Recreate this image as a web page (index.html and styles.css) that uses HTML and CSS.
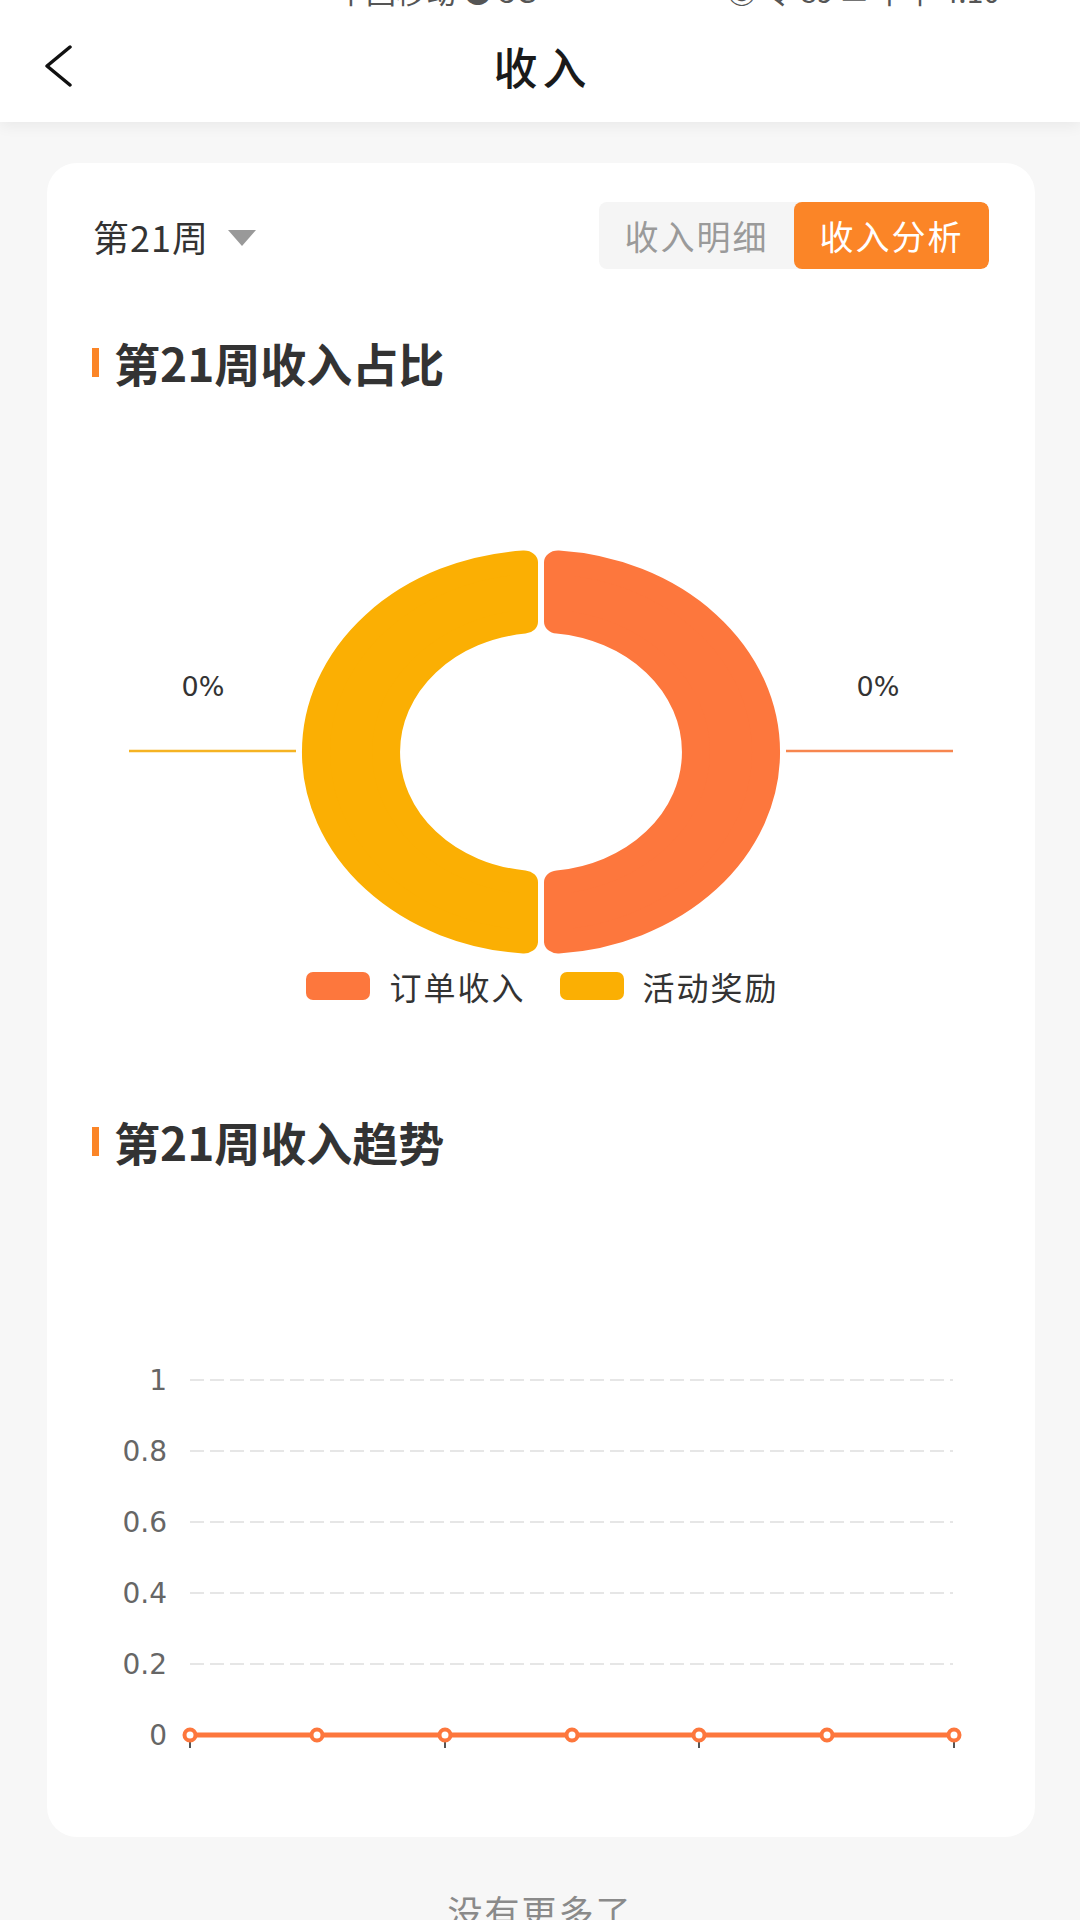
FILE: index.html
```html
<!DOCTYPE html>
<html lang="zh-CN">
<head>
<meta charset="utf-8">
<title>收入</title>
<link rel="stylesheet" href="styles.css">
</head>
<body>
<header class="topbar">
  <div class="status">
    <span class="status-left">中国移动 ● 5G</span>
    <span class="status-right">◉ 令 89 ▭ 下午 4:10</span>
  </div>
  <div class="nav">
    <div class="nav-left">
      <svg class="back" width="30" height="42" viewBox="0 0 30 42"><polyline points="27,2 4,21 27,40" fill="none" stroke="#111" stroke-width="3.5" stroke-linecap="round" stroke-linejoin="round"/></svg>
    </div>
    <div class="nav-title">收入</div>
    <div class="nav-right"></div>
  </div>
</header>

<main class="card">
  <div class="toolbar">
    <div class="week">第21周<span class="caret"></span></div>
    <div class="seg">
      <div class="seg-item off">收入明细</div>
      <div class="seg-item on">收入分析</div>
    </div>
  </div>

  <h2 class="section-title">第21周收入占比</h2>

  <svg class="pie" width="896" height="579" viewBox="0 0 896 579">
    <g transform="translate(448 365) scale(1 0.8452)">
      <path d="M-17,-224.36 A225,225 0 0 0 -17,224.36 L-17,154.06 A155,155 0 0 1 -17,-154.06 Z" fill="#fbaf03" stroke="#fbaf03" stroke-width="28" stroke-linejoin="round"/>
      <path d="M17,-224.36 A225,225 0 0 1 17,224.36 L17,154.06 A155,155 0 0 0 17,-154.06 Z" fill="#fd773d" stroke="#fd773d" stroke-width="28" stroke-linejoin="round"/>
    </g>
    <line x1="36" y1="364" x2="203" y2="364" stroke="#f5b323" stroke-width="2.5"/>
    <line x1="693" y1="364" x2="860" y2="364" stroke="#f7864f" stroke-width="2.5"/>
    <text class="pct" x="110" y="309" text-anchor="middle">0%</text>
    <text class="pct" x="785" y="309" text-anchor="middle">0%</text>
  </svg>

  <div class="legend">
    <div class="legend-item"><span class="swatch order"></span>订单收入</div>
    <div class="legend-item"><span class="swatch bonus"></span>活动奖励</div>
  </div>

  <h2 class="section-title second">第21周收入趋势</h2>

  <svg class="trend" width="896" height="632" viewBox="0 0 896 632">
    <g class="grid">
      <line x1="97" y1="214" x2="860" y2="214"/>
      <line x1="97" y1="285" x2="860" y2="285"/>
      <line x1="97" y1="356" x2="860" y2="356"/>
      <line x1="97" y1="427" x2="860" y2="427"/>
      <line x1="97" y1="498" x2="860" y2="498"/>
    </g>
    <g class="ylab">
      <text x="74" y="224">1</text>
      <text x="74" y="295">0.8</text>
      <text x="74" y="366">0.6</text>
      <text x="74" y="437">0.4</text>
      <text x="74" y="508">0.2</text>
      <text x="74" y="579">0</text>
    </g>
    <g class="ticks">
      <line x1="97" y1="572" x2="97" y2="582"/>
      <line x1="352" y1="572" x2="352" y2="582"/>
      <line x1="606" y1="572" x2="606" y2="582"/>
      <line x1="861" y1="572" x2="861" y2="582"/>
    </g>
    <line x1="97" y1="569" x2="861" y2="569" stroke="#fd773d" stroke-width="5"/>
    <g class="dots">
      <circle cx="97" cy="569" r="5.5"/>
      <circle cx="224" cy="569" r="5.5"/>
      <circle cx="352" cy="569" r="5.5"/>
      <circle cx="479" cy="569" r="5.5"/>
      <circle cx="606" cy="569" r="5.5"/>
      <circle cx="734" cy="569" r="5.5"/>
      <circle cx="861" cy="569" r="5.5"/>
    </g>
  </svg>
</main>

<footer class="footer">没有更多了</footer>
</body>
</html>
```

FILE: styles.css
```css
* { box-sizing: border-box; }

html, body {
  margin: 0;
  padding: 0;
}

body {
  width: 1080px;
  height: 1920px;
  overflow: hidden;
  background: #f7f7f7;
  font-family: "Noto Sans CJK SC", "Noto Sans", sans-serif;
  color: #333;
}

.topbar {
  background: #fff;
  height: 122px;
  box-shadow: 0 4px 14px rgba(0, 0, 0, 0.06);
  position: relative;
  z-index: 1;
}

.status {
  height: 10px;
  overflow: hidden;
  display: flex;
  padding-left: 336px;
  color: #555;
  font-size: 30px;
}

.status-left,
.status-right {
  display: block;
  margin-top: -28px;
  line-height: 36px;
  white-space: nowrap;
}

.status-right {
  margin-left: 190px;
}

.nav {
  height: 112px;
  display: grid;
  grid-template-columns: 1fr auto 1fr;
  align-items: center;
}

.nav-left {
  padding-left: 43px;
  display: flex;
  align-items: center;
}

.back { display: block; }

.nav-title {
  font-size: 44px;
  font-weight: 500;
  color: #1a1a1a;
  letter-spacing: 5px;
  padding-left: 5px;
}

.card {
  width: 988px;
  height: 1674px;
  margin: 41px 0 0 47px;
  background: #fff;
  border-radius: 30px;
  padding: 39px 46px;
}

.toolbar {
  height: 67px;
  display: flex;
  align-items: center;
  justify-content: space-between;
}

.week {
  display: flex;
  align-items: center;
  font-size: 36px;
  letter-spacing: 1px;
  color: #333;
}

.caret {
  width: 0;
  height: 0;
  margin-left: 19px;
  margin-top: 4px;
  border-left: 14px solid transparent;
  border-right: 14px solid transparent;
  border-top: 16px solid #999;
}

.seg {
  display: flex;
  height: 67px;
  border-radius: 8px;
  overflow: hidden;
  background: #f5f5f5;
}

.seg-item {
  width: 195px;
  display: flex;
  align-items: center;
  justify-content: center;
  font-size: 34px;
  letter-spacing: 2px;
}

.seg-item.off { color: #9a9a9a; }

.seg-item.on {
  background: #fb8527;
  color: #fff;
  border-radius: 8px;
}

.section-title {
  margin: 68px 0 0 0;
  height: 50px;
  display: flex;
  align-items: center;
  font-size: 46px;
  font-weight: 700;
  color: #333;
  letter-spacing: 0;
}

.section-title::before {
  content: "";
  width: 7px;
  height: 29px;
  background: #fb8527;
  margin-left: -1px;
  margin-right: 15px;
}

.section-title.second { margin-top: 110px; }

.pie, .trend { display: block; }

.pct {
  font-family: "DejaVu Sans", sans-serif;
  font-size: 27px;
  fill: #333;
}

.legend {
  height: 40px;
  display: flex;
  justify-content: center;
  align-items: center;
  gap: 34px;
  padding-left: 3px;
}

.legend-item {
  display: flex;
  align-items: center;
  font-size: 32px;
  letter-spacing: 2px;
  color: #333;
}

.swatch {
  width: 64px;
  height: 28px;
  border-radius: 7px;
  margin-right: 19px;
}

.swatch.order { background: #fd773d; }
.swatch.bonus { background: #fbaf03; }

.grid line {
  stroke: #e6e6e6;
  stroke-width: 2;
  stroke-dasharray: 14 6;
}

.ylab text {
  font-family: "DejaVu Sans", sans-serif;
  font-size: 28px;
  fill: #666;
  text-anchor: end;
}

.ticks line {
  stroke: #555;
  stroke-width: 2;
}

.dots circle {
  fill: #fff;
  stroke: #fd773d;
  stroke-width: 4;
}

.footer {
  text-align: center;
  padding-top: 48px;
  font-size: 35px;
  letter-spacing: 2px;
  color: #8a8a8a;
}
```
